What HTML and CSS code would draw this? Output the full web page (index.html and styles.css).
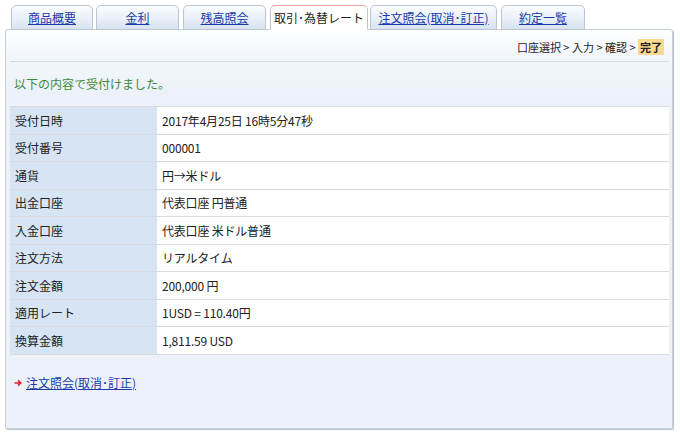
FILE: index.html
```html
<!DOCTYPE html>
<html lang="ja">
<head>
<meta charset="utf-8">
<title>取引・為替レート</title>
<link rel="stylesheet" href="styles.css">
</head>
<body>
<div class="tabs">
  <a class="tab t1" href="#">商品概要</a>
  <a class="tab t2" href="#">金利</a>
  <a class="tab t3" href="#">残高照会</a>
  <span class="tab t4 active">取引･為替レート</span>
  <a class="tab t5" href="#">注文照会(取消･訂正)</a>
  <a class="tab t6" href="#">約定一覧</a>
</div>
<div class="panel">
  <div class="steps">口座選択 &gt; 入力 &gt; 確認 &gt; <span class="cur">完了</span></div>
  <p class="msg">以下の内容で受付けました。</p>
  <table class="kv">
    <tr><th>受付日時</th><td>2017年4月25日 16時5分47秒</td></tr>
    <tr><th>受付番号</th><td>000001</td></tr>
    <tr><th>通貨</th><td>円→米ドル</td></tr>
    <tr><th>出金口座</th><td>代表口座 円普通</td></tr>
    <tr><th>入金口座</th><td>代表口座 米ドル普通</td></tr>
    <tr><th>注文方法</th><td>リアルタイム</td></tr>
    <tr><th>注文金額</th><td>200,000 円</td></tr>
    <tr><th>適用レート</th><td>1USD = 110.40円</td></tr>
    <tr><th>換算金額</th><td>1,811.59 USD</td></tr>
  </table>
  <div class="links">
    <svg class="arrow" width="8" height="8" viewBox="0 0 8 8"><path d="M0.5 4H6.5M4 1.3L6.8 4L4 6.7" fill="none" stroke="#e8202a" stroke-width="1.6"/></svg>
    <a href="#">注文照会(取消･訂正)</a>
  </div>
</div>
</body>
</html>
```
FILE: styles.css
```css
html, body {
  margin: 0;
  padding: 0;
  background: #ffffff;
}
body {
  font-family: "Noto Sans CJK JP", sans-serif;
  font-size: 12px;
  color: #222;
  width: 680px;
  height: 436px;
  overflow: hidden;
}
a { color: #1a3aa8; }

.tabs {
  display: flex;
  padding: 5px 0 0 11px;
  margin-bottom: -1px;
  position: relative;
  z-index: 1;
}
.tab {
  box-sizing: border-box;
  height: 25px;
  border: 1px solid #bcc6d0;
  border-radius: 5px 5px 0 0;
  background: linear-gradient(to bottom, #fbfdff 0%, #e9f0f9 55%, #d7e3f1 100%);
  display: flex;
  align-items: center;
  justify-content: center;
  font-size: 12px;
  line-height: 14px;
  white-space: nowrap;
  color: #1a3aa8;
  text-decoration: underline;
}
.t1 { width: 82px; margin-right: 3px; }
.t2 { width: 83px; margin-right: 4px; }
.t3 { width: 83px; margin-right: 4px; }
.t4 { width: 98px; margin-right: 2px; }
.t5 { width: 127px; margin-right: 4px; }
.t6 { width: 84px; }
.tab.active {
  background: #ffffff;
  border-top: 1px solid #f2a6aa;
  border-bottom: 1px solid #ffffff;
  color: #222;
  text-decoration: none;
}

.panel {
  box-sizing: border-box;
  margin-left: 5px;
  width: 668px;
  height: 400px;
  border: 1px solid #c6ced7;
  border-radius: 3px 3px 2px 2px;
  box-shadow: 1px 1px 1px #b9c0c8;
  background: linear-gradient(to bottom, #ffffff 0px, #f2f6fb 25px, #edf2fa 60px, #edf2fa 100%);
  padding: 0 3px 0 4px;
}

.steps {
  height: 32px;
  box-sizing: border-box;
  padding: 3px 5px 0 0;
  display: flex;
  align-items: center;
  justify-content: flex-end;
  font-size: 11px;
  color: #222;
  border-bottom: 1px solid #d6dbe1;
  white-space: pre;
}
.cur {
  background: #fbd98e;
  font-weight: bold;
  padding: 0 2px;
}

.msg {
  margin: 0;
  height: 44px;
  line-height: 44px;
  padding-left: 4px;
  color: #3d8a3a;
  font-size: 12px;
}

.kv {
  width: 100%;
  border-collapse: collapse;
  border-top: 1px solid #d8dadd;
}
.kv th, .kv td {
  height: 26.5px;
  padding: 0;
  border-bottom: 1px solid #d8dadd;
  text-align: left;
  font-weight: normal;
  vertical-align: middle;
}
.kv th {
  width: 147px;
  box-sizing: border-box;
  padding-left: 5px;
  background: #d6e4f3;
  font-size: 12px;
  color: #222;
}
.kv td {
  background: #ffffff;
  padding-left: 5px;
  font-family: "Liberation Sans Narrow", "Noto Sans CJK JP", sans-serif;
  font-size: 12px;
  letter-spacing: -0.2px;
  color: #222;
}

.links {
  margin-top: 20px;
  padding-left: 4px;
  display: flex;
  align-items: center;
  gap: 4px;
  line-height: 16px;
  font-size: 12px;
}
.arrow { display: block; }
```
